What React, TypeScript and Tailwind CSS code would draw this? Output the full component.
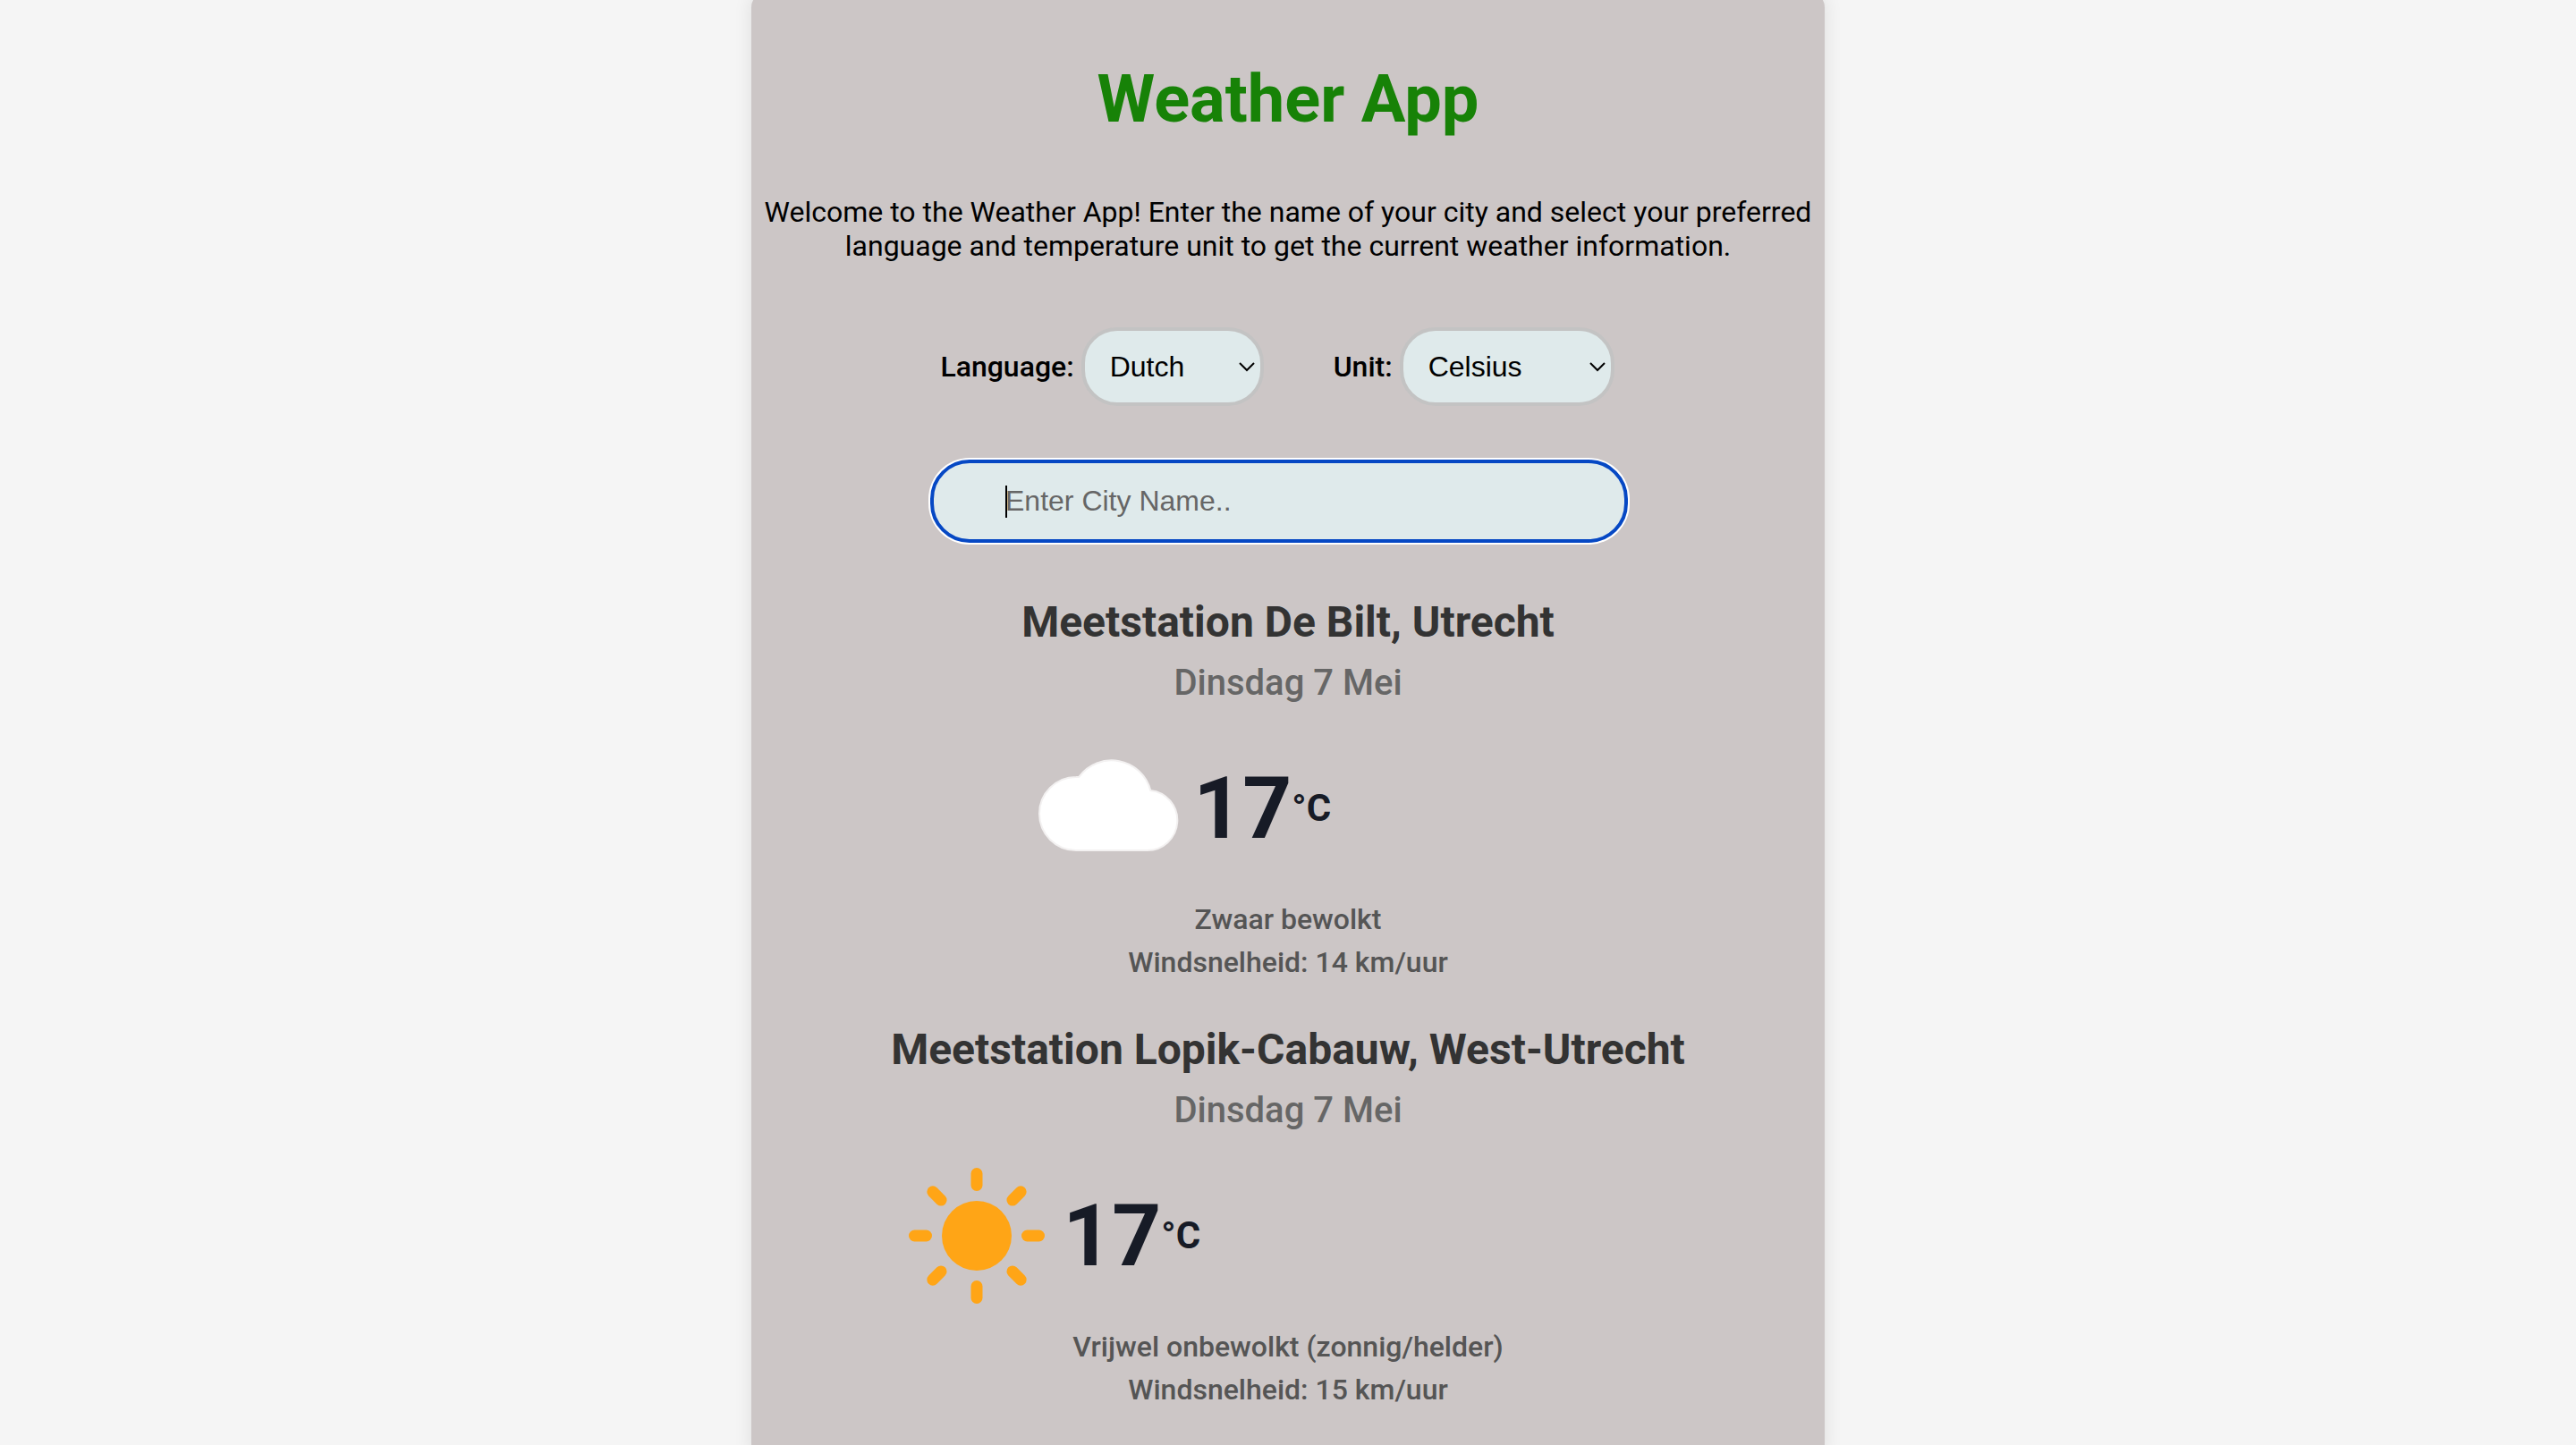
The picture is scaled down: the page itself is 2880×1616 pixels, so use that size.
import { useState } from "react";
import type { ReactNode } from "react";

type Unit = "celsius" | "fahrenheit";

interface Station {
  name: string;
  date: string;
  icon: "cloud" | "sun";
  celsius: number;
  description: string;
  wind: string;
}

const stations: Station[] = [
  {
    name: "Meetstation De Bilt, Utrecht",
    date: "Dinsdag 7 Mei",
    icon: "cloud",
    celsius: 17,
    description: "Zwaar bewolkt",
    wind: "Windsnelheid: 14 km/uur",
  },
  {
    name: "Meetstation Lopik-Cabauw, West-Utrecht",
    date: "Dinsdag 7 Mei",
    icon: "sun",
    celsius: 17,
    description: "Vrijwel onbewolkt (zonnig/helder)",
    wind: "Windsnelheid: 15 km/uur",
  },
];

function CloudIcon() {
  return (
    <svg viewBox="0 0 192 192" className="size-48 shrink-0" aria-hidden="true">
      <path
        d="M61 143A41 41 0 0 1 61 61L64.500 60.700A45 45 0 0 1 144.300 76A33.600 33.600 0 0 1 140 143Z"
        fill="#fff"
        stroke="#f3f1f1"
        strokeWidth="2"
      />
    </svg>
  );
}

const rayAngles = [0, 45, 90, 135, 180, 225, 270, 315];

function SunIcon() {
  return (
    <svg viewBox="0 0 192 192" className="size-48 shrink-0" aria-hidden="true">
      <circle cx="96" cy="96" r="39" fill="#ffa516" />
      {rayAngles.map((angle) => (
        <line
          key={angle}
          x1="96"
          y1={39.5}
          x2="96"
          y2={26.5}
          transform={`rotate(${angle} 96 96)`}
          stroke="#ffa516"
          strokeWidth="13"
          strokeLinecap="round"
        />
      ))}
    </svg>
  );
}

interface SelectFieldProps {
  id: string;
  label: string;
  value: string;
  onChange: (value: string) => void;
  widthClass: string;
  children: ReactNode;
}

function SelectField({ id, label, value, onChange, widthClass, children }: SelectFieldProps) {
  return (
    <div className="flex items-center gap-2">
      <label htmlFor={id} className="font-medium">
        {label}
      </label>
      <div className={`relative ${widthClass}`}>
        <select
          id={id}
          value={value}
          onChange={(event) => onChange(event.target.value)}
          className="h-[88px] w-full appearance-none rounded-[40px] border-4 border-[#c3c3c3] bg-[#dfeaeb] pr-12 pl-7 font-['Liberation_Sans',sans-serif] text-[32px] text-black"
        >
          {children}
        </select>
        <svg
          viewBox="0 0 20 12"
          className="pointer-events-none absolute top-[38px] right-[9px] h-3 w-5"
          fill="none"
          stroke="#000"
          strokeWidth="2"
          aria-hidden="true"
        >
          <path d="M2 2L10 10L18 2" />
        </svg>
      </div>
    </div>
  );
}

function StationReport({ station, unit }: { station: Station; unit: Unit }) {
  const degrees = unit === "celsius" ? station.celsius : Math.round(station.celsius * 1.8 + 32);
  return (
    <article className="text-center font-medium">
      <h2 className="text-5xl leading-[56px] font-bold text-[#333]">{station.name}</h2>
      <p className="mt-4 text-[40px] leading-[48px] text-[#666]">{station.date}</p>
      <div className="mt-5 flex items-center font-bold text-[#171b26]">
        {station.icon === "cloud" ? <CloudIcon /> : <SunIcon />}
        <span className="text-8xl">{degrees}</span>
        <span className="text-[42px]">{unit === "celsius" ? "°C" : "°F"}</span>
      </div>
      <div className="mt-1 leading-[48px] text-[#555]">
        <p>{station.description}</p>
        <p>{station.wind}</p>
      </div>
    </article>
  );
}

export default function App() {
  const [language, setLanguage] = useState("nl");
  const [unit, setUnit] = useState<Unit>("celsius");
  const [city, setCity] = useState("");

  return (
    <div className="min-h-screen overflow-hidden bg-[#f5f5f5] font-['Roboto',sans-serif] text-[32px] leading-[38px] text-black">
      <main className="mx-auto -mt-2 flex min-h-screen max-w-[1200px] flex-col items-center rounded-t-2xl bg-[#ccc6c6] pt-[75px] pb-12 shadow-[0_0_20px_rgba(0,0,0,0.1)]">
        <h1 className="text-[74px] leading-[88px] font-bold text-[#178207]">Weather App</h1>
        <p className="mt-[63px] text-center">
          Welcome to the Weather App! Enter the name of your city and select your preferred language and
          temperature unit to get the current weather information.
        </p>

        <form className="mt-[72px] flex w-full flex-col items-center" onSubmit={(event) => event.preventDefault()}>
          <div className="mr-6 flex items-center gap-[78px]">
            <SelectField
              id="language"
              label="Language:"
              value={language}
              onChange={setLanguage}
              widthClass="w-[204px]"
            >
              <option value="nl">Dutch</option>
              <option value="en">English</option>
            </SelectField>
            <SelectField
              id="unit"
              label="Unit:"
              value={unit}
              onChange={(value) => setUnit(value as Unit)}
              widthClass="w-60"
            >
              <option value="celsius">Celsius</option>
              <option value="fahrenheit">Fahrenheit</option>
            </SelectField>
          </div>

          <div className="relative mt-[60px] mr-5 w-[65%]">
            <input
              type="text"
              aria-label="City name"
              placeholder="Enter City Name.."
              value={city}
              onChange={(event) => setCity(event.target.value)}
              autoFocus
              className="block h-[93px] w-full rounded-[44px] border-4 border-[#0648c4] bg-[#dfeaeb] px-20 font-['Liberation_Sans',sans-serif] text-[32px] text-black caret-transparent shadow-[0_0_0_2px_#fff] outline-none placeholder:text-[#666]"
            />
            {city === "" && (
              <span className="pointer-events-none absolute top-[29px] left-[84px] h-9 w-0.5 bg-black" aria-hidden="true" />
            )}
          </div>
        </form>

        <div className="mt-[61px] flex flex-col items-center gap-[46px]">
          {stations.map((station) => (
            <StationReport key={station.name} station={station} unit={unit} />
          ))}
        </div>
      </main>
    </div>
  );
}
